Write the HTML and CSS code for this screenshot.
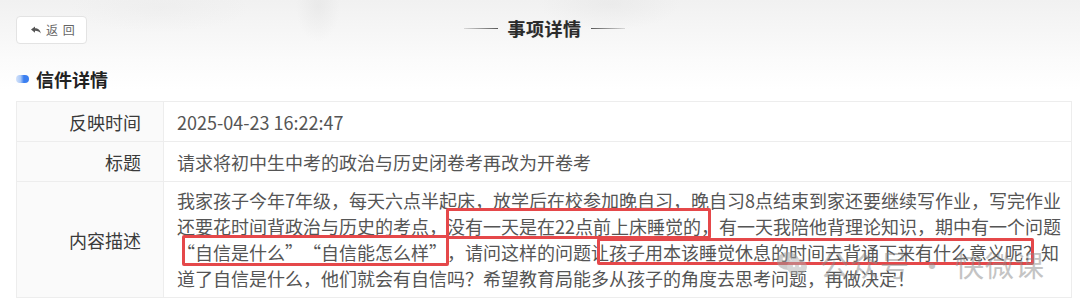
FILE: index.html
```html
<!DOCTYPE html>
<html lang="zh-CN">
<head>
<meta charset="utf-8">
<title>事项详情</title>
<link rel="stylesheet" href="styles.css">
</head>
<body>
<div class="page">
  <div class="ink"></div>
  <header class="topbar">
    <div class="topbar-left">
      <button class="back-btn" type="button">
        <svg class="back-icon" viewBox="0 0 10 8" width="10" height="8" aria-hidden="true">
          <path d="M0 3.6 L4 0.4 L4 2.2 C7 2.2 9.2 3.6 9.8 7.6 C8.6 5.6 6.8 4.8 4 4.8 L4 6.8 Z" fill="#555"/>
        </svg>
        <span>返 回</span>
      </button>
    </div>
    <h1 class="page-title"><span class="line line-l"></span>事项详情<span class="line line-r"></span></h1>
    <div class="topbar-right"></div>
  </header>

  <section class="section">
    <h2 class="sec-title"><span class="sec-dot"></span>信件详情</h2>
    <table class="detail">
      <tr class="row-short">
        <th>反映时间</th>
        <td>2025-04-23 16:22:47</td>
      </tr>
      <tr class="row-short">
        <th>标题</th>
        <td>请求将初中生中考的政治与历史闭卷考再改为开卷考</td>
      </tr>
      <tr>
        <th>内容描述</th>
        <td class="content">
          <p class="content-text">我家孩子今年7年级，每天六点半起床，放学后在校参加晚自习，晚自习8点结束到家还要继续写作业，写完作业还要花时间背政治与历史的考点，没有一天是在22点前上床睡觉的，有一天我陪他背理论知识，期中有一个问题<span class="qo">“</span>自信是什么<span class="qc">”</span><span class="qo">“</span>自信能怎么样<span class="qc">”</span>，请问这样的问题让孩子用本该睡觉休息的时间去背诵下来有什么意义呢？知道了自信是什么，他们就会有自信吗？希望教育局能多从孩子的角度去思考问题，再做决定！</p>
          <span class="mark mark-1"></span>
          <span class="mark mark-2"></span>
          <span class="mark mark-3"></span>
          <div class="watermark">
            <svg class="wm-icon" viewBox="0 0 32 26" width="32" height="26" aria-hidden="true">
              <ellipse cx="12" cy="10" rx="11" ry="9" fill="#9a9a9a"/>
              <ellipse cx="21" cy="16" rx="10" ry="8.5" fill="#b0b0b0"/>
              <circle cx="8" cy="8" r="1.4" fill="#fff"/>
              <circle cx="15" cy="8" r="1.4" fill="#fff"/>
              <circle cx="18" cy="15" r="1.2" fill="#fff"/>
              <circle cx="24" cy="15" r="1.2" fill="#fff"/>
            </svg>
            <span>公众号 · 快微课</span>
          </div>
        </td>
      </tr>
    </table>
  </section>
</div>
</body>
</html>
```

FILE: styles.css
```css
* { box-sizing: border-box; }
html, body { margin: 0; padding: 0; }
body {
  width: 1080px;
  height: 308px;
  overflow: hidden;
  background: #ffffff;
  font-family: "Noto Sans CJK SC", "Noto Sans", sans-serif;
  color: #333;
}
.page {
  position: relative;
  width: 1080px;
  height: 308px;
  padding: 0 8px 0 16px;
  background: linear-gradient(180deg, #f1f1f1 0px, #f6f6f6 30px, #fbfbfb 60px, #ffffff 90px);
}
.ink {
  position: absolute;
  left: 0; top: 0;
  width: 1080px; height: 70px;
  background:
    radial-gradient(ellipse 22px 36px at 318px 6px, rgba(215,215,215,0.3), rgba(215,215,215,0) 100%),
    radial-gradient(ellipse 70px 26px at 610px 4px, rgba(220,220,220,0.3), rgba(220,220,220,0) 100%),
    radial-gradient(ellipse 90px 24px at 160px 8px, rgba(228,228,228,0.25), rgba(228,228,228,0) 100%);
  pointer-events: none;
}
.topbar {
  position: relative;
  display: grid;
  grid-template-columns: 1fr auto 1fr;
  align-items: center;
  padding-top: 16px;
  height: 44px;
}
.back-btn {
  display: flex;
  align-items: center;
  gap: 5px;
  width: 71px;
  height: 28px;
  padding: 0 0 0 14px;
  background: #fff;
  border: 1px solid #e3e3e3;
  border-radius: 4px;
  font-family: inherit;
  font-size: 12px;
  color: #666;
  cursor: pointer;
}
.back-btn span { letter-spacing: 1px; line-height: 1; }
.back-icon { display: block; }
.page-title {
  margin: 0 0 4px 0;
  display: flex;
  align-items: center;
  font-size: 18px;
  font-weight: 700;
  line-height: 24px;
  color: #2b2b2b;
  letter-spacing: 0.5px;
  text-shadow: 0 0 1px rgba(0,0,0,0.2);
}
.line {
  display: block;
  width: 34px;
  height: 1px;
  background: #6a6a6a;
}
.line-l { margin-right: 10px; background: linear-gradient(90deg, rgba(100,100,100,0.2), #5a5a5a); }
.line-r { margin-left: 9px; background: linear-gradient(90deg, #5a5a5a, rgba(100,100,100,0.2)); }

.section { position: relative; }
.sec-title {
  display: flex;
  align-items: center;
  margin: 23px 0 10px 0;
  height: 24px;
  font-size: 18px;
  font-weight: 700;
  color: #222;
  line-height: 24px;
}
.sec-dot {
  display: block;
  width: 13px;
  height: 8px;
  margin-right: 7px;
  border-radius: 4px;
  background: linear-gradient(90deg, #d3e2fb 0%, #a9c8f7 35%, #3b7ff0 60%, #3b7ff0 100%);
}
.detail {
  width: 1056px;
  border-collapse: collapse;
  table-layout: fixed;
  font-size: 18px;
}
.detail th, .detail td {
  border: 1px solid #ededed;
}
.detail th {
  width: 147px;
  padding: 0 22px 0 0;
  background: #fafafa;
  text-align: right;
  font-weight: 400;
  color: #3a3a3a;
  vertical-align: middle;
}
.detail td {
  padding: 0 10px 0 13px;
  color: #555;
  background: #fff;
  line-height: 26px;
}
.row-short th, .row-short td { height: 40px; }
.detail td.content {
  position: relative;
  padding-top: 5px;
  padding-bottom: 6px;
}
.content-text {
  margin: 0;
  line-height: 26px;
}
.qo, .qc {
  display: inline-block;
  width: 1em;
}
.qo { text-align: right; }
.qc { text-align: left; }
.mark {
  position: absolute;
  border: 3px solid #e5484a;
  border-radius: 2px;
  pointer-events: none;
}
.mark-1 { left: 282px; top: 26px; width: 265px; height: 31px; }
.mark-2 { left: 18px; top: 53px; width: 267px; height: 31px; }
.mark-3 { left: 433px; top: 56px; width: 437px; height: 27px; }
.watermark {
  position: absolute;
  left: 612px;
  top: 64px;
  display: flex;
  align-items: center;
  gap: 12px;
  opacity: 0.5;
  pointer-events: none;
}
.watermark span {
  font-size: 29px;
  line-height: 36px;
  color: #8a8a8a;
  letter-spacing: 1px;
}
```
